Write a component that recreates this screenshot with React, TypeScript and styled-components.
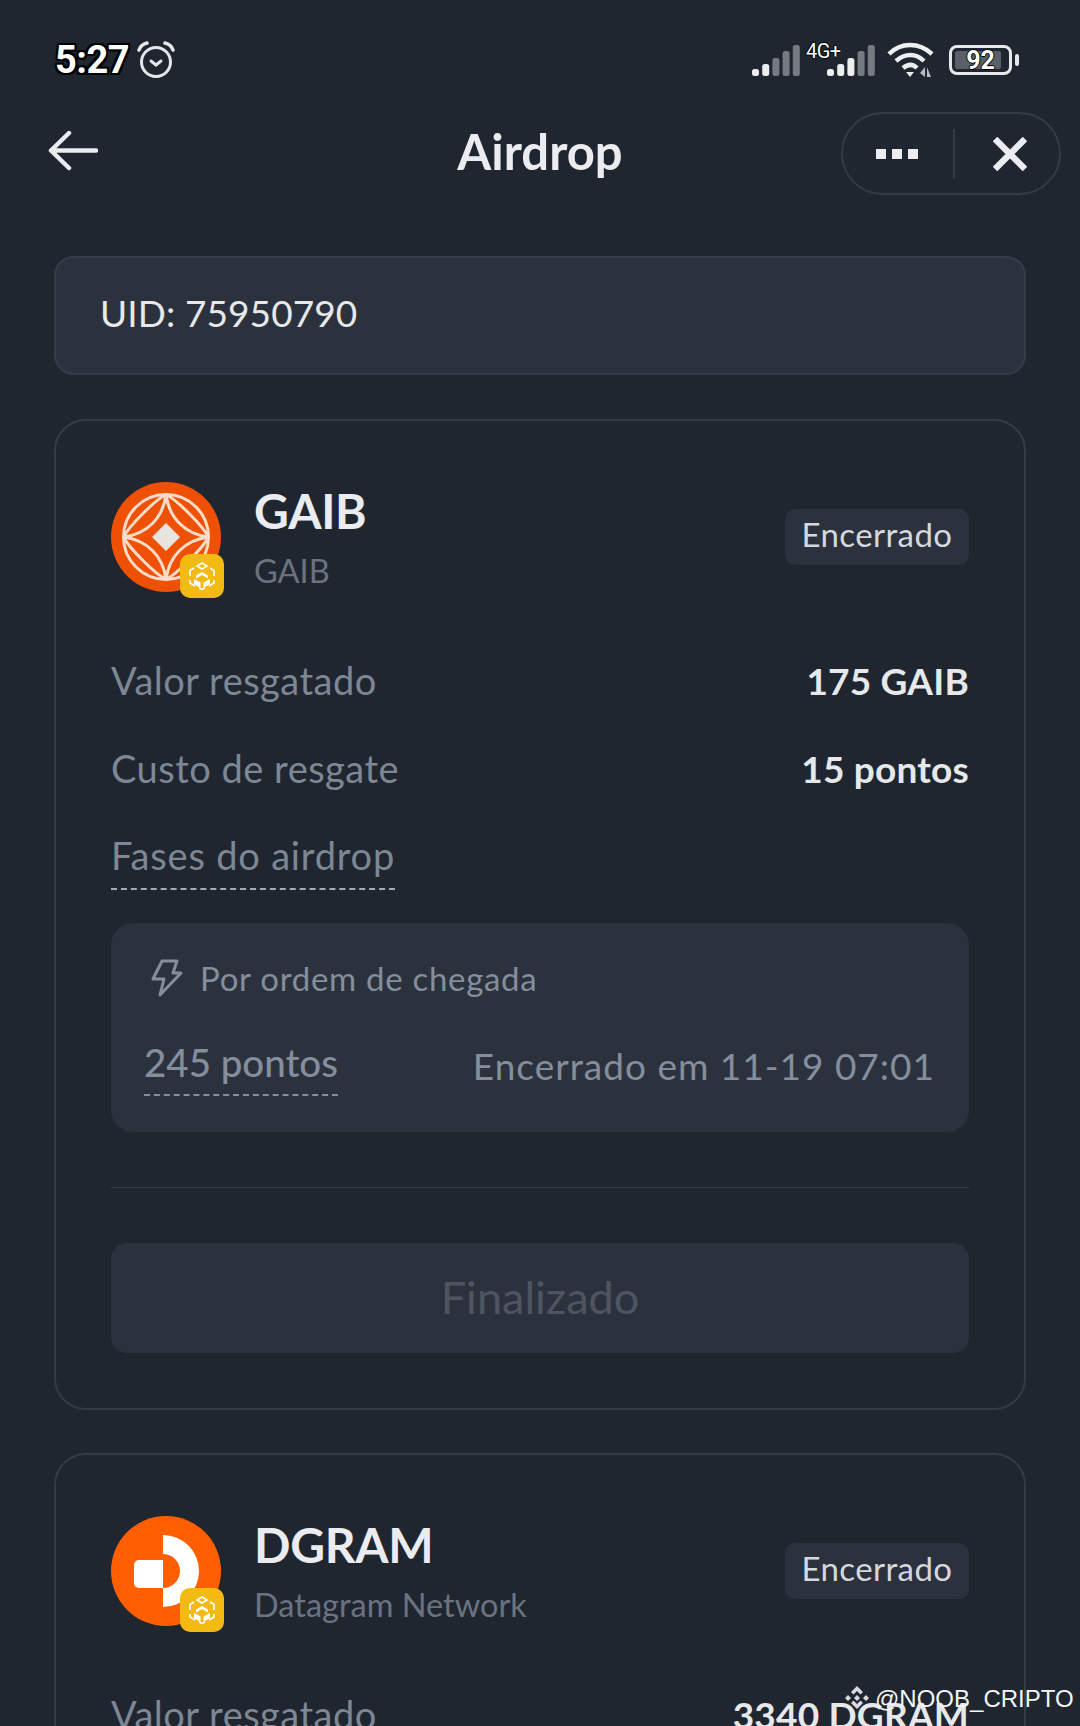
import React from "react";
import styled, { createGlobalStyle } from "styled-components";

const Global = createGlobalStyle`
  html, body { margin: 0; padding: 0; background: #1f2630; }
  * { box-sizing: border-box; }
`;

const Page = styled.div`
  position: relative;
  width: 1080px;
  height: 1726px;
  overflow: hidden;
  background: #1f2630;
  font-family: "Lato", "Liberation Sans", sans-serif;
  color: #eaecef;
`;

const StatusBar = styled.div`
  display: flex;
  justify-content: space-between;
  align-items: center;
  height: 44px;
  padding: 38px 68px 0 55px;
  box-sizing: content-box;
`;
const Cluster = styled.div`
  display: flex;
  align-items: center;
`;
const Clock = styled.span`
  font-family: Roboto, "Liberation Sans", sans-serif;
  font-weight: 700;
  font-size: 38px;
  letter-spacing: -0.5px;
  color: #fff;
  text-shadow: -2px 0 #000, 2px 0 #000, 0 -2px #000, 0 2px #000, -2px -2px #000, 2px 2px #000, -2px 2px #000, 2px -2px #000;
  margin-right: 7px;
`;
const SignalWrap = styled.div`
  position: relative;
  display: flex;
  margin-left: 27px;
`;
const NetLabel = styled.span`
  position: absolute;
  left: -21px;
  top: -6px;
  font-family: Roboto, "Liberation Sans", sans-serif;
  font-size: 20px;
  letter-spacing: -0.5px;
  color: #fff;
  text-shadow: -1px 0 #000, 1px 0 #000, 0 -1px #000, 0 1px #000;
`;
const Battery = styled.div`
  position: relative;
  width: 63px;
  height: 30px;
  margin-left: 15px;
  border: 3px solid #e6e8ea;
  border-radius: 8px;
  display: flex;
  align-items: center;
  justify-content: center;
  &::before {
    content: "";
    position: absolute;
    left: 3px;
    top: 3px;
    bottom: 3px;
    width: 46px;
    background: #5b6068;
    border-radius: 2px;
  }
  &::after {
    content: "";
    position: absolute;
    right: -10px;
    top: 6px;
    width: 4px;
    height: 12px;
    background: #e6e8ea;
    border-radius: 2px;
  }
`;
const BatteryValue = styled.span`
  position: relative;
  z-index: 1;
  font-family: Roboto, "Liberation Sans", sans-serif;
  font-weight: 700;
  font-size: 25px;
  color: #fff;
  text-shadow: -1px 0 #000, 1px 0 #000, 0 -1px #000, 0 1px #000;
`;

const NavBar = styled.div`
  display: flex;
  align-items: center;
  justify-content: space-between;
  position: relative;
  height: 83px;
  margin-top: 30px;
  padding: 0 19px 0 48px;
`;
const BackSlot = styled.div`
  display: flex;
  margin-bottom: 5px;
`;
const NavTitle = styled.h1`
  position: absolute;
  left: 0;
  right: 0;
  margin: 0 0 6px;
  text-align: center;
  font-size: 49px;
  font-weight: 700;
  color: #eaecef;
  pointer-events: none;
`;
const Capsule = styled.div`
  display: flex;
  align-items: center;
  width: 220px;
  height: 83px;
  border: 2px solid #343b47;
  border-radius: 42px;
`;
const CapsuleSlot = styled.div<{ $wide?: boolean }>`
  display: flex;
  align-items: center;
  justify-content: center;
  ${(p) => (p.$wide ? "width: 108px; margin-right: 2px;" : "flex: 1; padding-left: 6px;")}
`;
const CapsuleDivider = styled.div`
  width: 2px;
  height: 49px;
  background: #343b47;
`;

const Content = styled.div`
  display: flex;
  flex-direction: column;
  gap: 43px;
  padding: 61px 54px 0;
`;
const UidBox = styled.div`
  height: 119px;
  margin-bottom: 1px;
  display: flex;
  align-items: center;
  padding: 0 0 6px 44px;
  background: #2c323d;
  border: 2px solid #363d49;
  border-radius: 20px;
  font-size: 37px;
  letter-spacing: 0.1px;
  color: #e6e8ea;
`;
const Card = styled.section`
  flex: none;
  border: 2px solid #343b47;
  border-radius: 32px;
  padding: 61px 55px 55px;
`;
const CardHead = styled.div`
  display: flex;
  align-items: center;
  margin-bottom: 46px;
`;
const Logo = styled.div`
  position: relative;
  width: 110px;
  height: 110px;
  flex: none;
  margin-right: 33px;
`;
const ChainBadge = styled.div`
  position: absolute;
  left: 69px;
  top: 72px;
  width: 44px;
  height: 44px;
  border-radius: 10px;
  background: #f3ba12;
  display: flex;
  align-items: center;
  justify-content: center;
`;
const Names = styled.div`
  flex: 1;
  display: flex;
  flex-direction: column;
  gap: 12px;
`;
const CoinName = styled.div`
  font-size: 48px;
  font-weight: 700;
  letter-spacing: -0.3px;
  line-height: 56px;
  color: #eaecef;
`;
const CoinFull = styled.div`
  font-size: 32.500px;
  line-height: 40px;
  color: #6b7280;
`;
const StatusTag = styled.div`
  width: 184px;
  height: 56px;
  display: flex;
  align-items: center;
  justify-content: center;
  padding-bottom: 6px;
  background: #2c323d;
  border-radius: 10px;
  font-size: 33px;
  letter-spacing: 0.4px;
  color: #d5d8dd;
`;
const Row = styled.div`
  display: flex;
  justify-content: space-between;
  align-items: center;
  height: 88px;
  padding-bottom: 4px;
`;
const Label = styled.span<{ $dashed?: boolean }>`
  font-size: 38px;
  letter-spacing: 0.5px;
  color: #7e8794;
  ${(p) => p.$dashed && "letter-spacing: 0.8px; border-bottom: 2px dashed #a4abb5; padding-bottom: 10px; margin-top: 10px;"}
`;
const Value = styled.span`
  font-size: 37px;
  font-weight: 700;
  letter-spacing: 0.2px;
  color: #e6e8ea;
`;
const PhasePanel = styled.div`
  height: 209px;
  margin-top: 21px;
  padding: 30px 33px 0;
  background: #2c323d;
  border-radius: 22px;
`;
const PhaseHead = styled.div`
  display: flex;
  align-items: center;
  gap: 17px;
  height: 54px;
  padding: 0 0 4px 7px;
  font-size: 33px;
  letter-spacing: 0.7px;
  color: #848e9c;
`;
const PhaseRow = styled.div`
  display: flex;
  justify-content: space-between;
  align-items: flex-start;
  margin-top: 32px;
  padding-right: 1px;
`;
const PhasePoints = styled.span`
  font-size: 38.500px;
  font-weight: 500;
  color: #848e9c;
  border-bottom: 2px dashed #848e9c;
  padding-bottom: 9px;
`;
const PhaseDate = styled.span`
  font-size: 37px;
  letter-spacing: 1px;
  color: #848e9c;
  margin-top: 4px;
`;
const Divider = styled.hr`
  margin: 55px 0 55px;
  border: 0;
  height: 1px;
  background: #343b47;
`;
const DoneButton = styled.div`
  height: 110px;
  display: flex;
  align-items: center;
  justify-content: center;
  padding-bottom: 2px;
  background: #2c323d;
  border-radius: 16px;
  font-size: 45px;
  color: #4e5561;
`;

const Watermark = styled.div`
  position: absolute;
  left: 843px;
  top: 1685px;
  display: flex;
  align-items: center;
  gap: 4px;
  font-family: "Liberation Sans", Arial, sans-serif;
  font-size: 24px;
  color: #f4f5f6;
  white-space: nowrap;
`;

const Alarm = () => (
  <svg width="40" height="38" viewBox="0 0 40 38" fill="none" stroke="#e4e6e9" strokeLinecap="round">
    <circle cx="20" cy="21" r="14.500" strokeWidth="3" />
    <path d="M15 20l5 4 5-4" strokeWidth="3" />
    <path d="M3 9c1-3 4-6 8-7M37 9c-1-3-4-6-8-7" strokeWidth="3.500" />
  </svg>
);

const Signal = ({ on }: { on: number }) => (
  <svg width="48" height="31" viewBox="0 0 48 31">
    {[7, 12, 18, 25, 31].map((h, i) => (
      <rect key={i} x={i * 10.2} y={31 - h} width="7" height={h} rx="2.500" fill={i < on ? "#eceef0" : "#777b81"} />
    ))}
  </svg>
);

const Wifi = () => (
  <svg width="47" height="36" viewBox="0 0 47 36" fill="none" stroke="#eceef0" strokeWidth="4.500" style={{ marginLeft: 12 }}>
    <path d="M2 12C14 0 32 0 45 12" />
    <path d="M9 19c9-8 20-8 28 0" />
    <path d="M16 26c5-4 10-4 14 0" />
    <path d="M19 30h8l-4 5z" fill="#eceef0" stroke="none" />
    <path d="M38 25v10l-5-4zM40 25v10h4z" fill="#b7bbc0" stroke="none" />
  </svg>
);

const BackArrow = () => (
  <svg width="50" height="40" viewBox="0 0 50 40" fill="none" stroke="#eaecef" strokeWidth="4.500" strokeLinecap="round" strokeLinejoin="round">
    <path d="M48 19.500H3M21 2L3 19.500 21 37" />
  </svg>
);

const Dots = () => (
  <svg width="42" height="10" viewBox="0 0 42 10" fill="#eaecef">
    <rect width="10" height="10" />
    <rect x="16" width="10" height="10" />
    <rect x="32" width="10" height="10" />
  </svg>
);

const CloseX = () => (
  <svg width="34" height="34" viewBox="0 0 34 34" stroke="#eaecef" strokeWidth="6.500">
    <path d="M2 2l30 30M32 2L2 32" />
  </svg>
);

const Bolt = () => (
  <svg width="32" height="38" viewBox="0 0 32 38" fill="none" stroke="#848e9c" strokeWidth="3" strokeLinejoin="round">
    <path d="M11 2h15l-4 12h8L9 36l4-16H2z" />
  </svg>
);

const Bnb = () => (
  <svg width="26" height="28" viewBox="0 0 26 28" fill="none" stroke="#fff" strokeWidth="1.600">
    <path d="M13 1l5 3-5 3-5-3zM5 6L1 8.500V14M21 6l4 2.500V14M1 18v3l5 3M25 18v3l-5 3M10 26l3 1.500 3-1.500" />
    <path d="M13 10l6 3.500v3L13 13l-6 3.500v-3z" fill="#fff" stroke="none" />
    <path d="M5 17l6.500 3.500V26L5 22zM21 17l-6.500 3.500V26L21 22z" fill="#fff" stroke="none" />
  </svg>
);

const GaibLogo = () => (
  <svg width="110" height="110" viewBox="0 0 110 110" fill="none" stroke="#fbdcc8" strokeWidth="3">
    <circle cx="55" cy="55" r="55" fill="#ee5006" stroke="none" />
    <circle cx="55" cy="55" r="42.500" />
    <path d="M55 12.500C58 36 74 52 97.500 55C74 58 58 74 55 97.500C52 74 36 58 12.500 55C36 52 52 36 55 12.500Z" />
    <path d="M55 12.500C66 18 92 44 97.500 55C92 66 66 92 55 97.500C44 92 18 66 12.500 55C18 44 44 18 55 12.500Z" />
    <path d="M55 41l14 14-14 14-14-14z" fill="#e9e4e0" stroke="none" />
  </svg>
);

const DgramLogo = () => (
  <svg width="110" height="110" viewBox="0 0 110 110">
    <circle cx="55" cy="55" r="55" fill="#ff5f00" />
    <path d="M52 19A36 36 0 0 1 52 91V72A17 17 0 0 0 52 38Z" fill="#fff" />
    <path d="M28 44H52V72H28a5 5 0 0 1-5-5V49a5 5 0 0 1 5-5Z" fill="#fff" />
  </svg>
);

const BinanceMark = () => (
  <svg width="28" height="28" viewBox="0 0 28 28" fill="#d8dadd">
    <path d="M14 1l6 6-2.500 2.500L14 6 10.500 9.500 8 7zM5 10l3 3-3 3-3-3zM23 10l3 3-3 3-3-3zM14 10l3 3-3 3-3-3zM8 18l2.500-2.500L14 19l3.500-3.500L20 18l-6 6z" />
  </svg>
);

export default function App() {
  return (
    <Page>
      <Global />
      <StatusBar>
        <Cluster>
          <Clock>5:27</Clock>
          <Alarm />
        </Cluster>
        <Cluster>
          <Signal on={2} />
          <SignalWrap>
            <NetLabel>4G+</NetLabel>
            <Signal on={3} />
          </SignalWrap>
          <Wifi />
          <Battery>
            <BatteryValue>92</BatteryValue>
          </Battery>
        </Cluster>
      </StatusBar>

      <NavBar>
        <BackSlot>
          <BackArrow />
        </BackSlot>
        <NavTitle>Airdrop</NavTitle>
        <Capsule>
          <CapsuleSlot $wide>
            <Dots />
          </CapsuleSlot>
          <CapsuleDivider />
          <CapsuleSlot>
            <CloseX />
          </CapsuleSlot>
        </Capsule>
      </NavBar>

      <Content>
        <UidBox>UID: 75950790</UidBox>

        <Card>
          <CardHead>
            <Logo>
              <GaibLogo />
              <ChainBadge>
                <Bnb />
              </ChainBadge>
            </Logo>
            <Names>
              <CoinName>GAIB</CoinName>
              <CoinFull>GAIB</CoinFull>
            </Names>
            <StatusTag>Encerrado</StatusTag>
          </CardHead>
          <Row>
            <Label>Valor resgatado</Label>
            <Value>175 GAIB</Value>
          </Row>
          <Row>
            <Label>Custo de resgate</Label>
            <Value>15 pontos</Value>
          </Row>
          <Row>
            <Label $dashed>Fases do airdrop</Label>
          </Row>
          <PhasePanel>
            <PhaseHead>
              <Bolt />
              Por ordem de chegada
            </PhaseHead>
            <PhaseRow>
              <PhasePoints>245 pontos</PhasePoints>
              <PhaseDate>Encerrado em 11-19 07:01</PhaseDate>
            </PhaseRow>
          </PhasePanel>
          <Divider />
          <DoneButton>Finalizado</DoneButton>
        </Card>

        <Card>
          <CardHead>
            <Logo>
              <DgramLogo />
              <ChainBadge>
                <Bnb />
              </ChainBadge>
            </Logo>
            <Names>
              <CoinName>DGRAM</CoinName>
              <CoinFull>Datagram Network</CoinFull>
            </Names>
            <StatusTag>Encerrado</StatusTag>
          </CardHead>
          <Row>
            <Label>Valor resgatado</Label>
            <Value>3340 DGRAM</Value>
          </Row>
        </Card>
      </Content>

      <Watermark>
        <BinanceMark />
        @NOOB_CRIPTO
      </Watermark>
    </Page>
  );
}
